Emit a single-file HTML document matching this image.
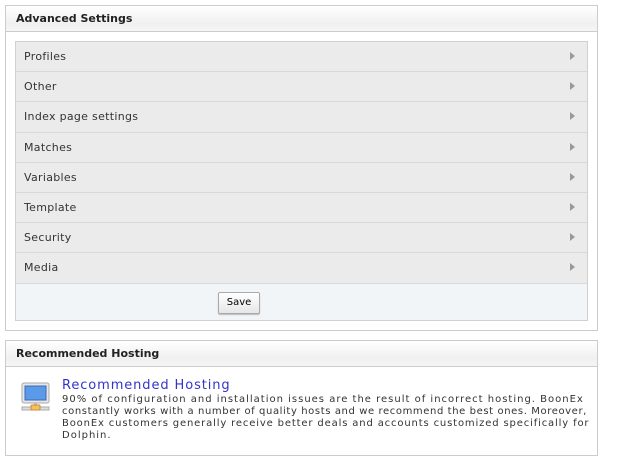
<!DOCTYPE html>
<html><head><style>
body{margin:0;background:#fff;font-family:"DejaVu Sans",Verdana,sans-serif;width:618px;height:464px;position:relative;overflow:hidden}
.box{position:absolute;left:5px;width:591px;border:1px solid #ccc;background:#fff}
.hd{height:25px;border-bottom:1px solid #ccc;background:linear-gradient(#fff,#f0f0f0 70%,#f5f5f5);font-weight:bold;font-size:11px;line-height:25px;padding-left:10px;color:#222}
.list{position:absolute;left:9px;top:35px;width:571px;border:1px solid #d0d0d0;background:#ebebeb}
.row{height:29px;border-bottom:1px solid #d8d8d8;font-size:11px;line-height:30px;padding-left:8px;color:#333;position:relative;letter-spacing:0.3px}
.row.t{height:30px}
.row:after{content:"";position:absolute;right:12px;top:10px;border-left:5px solid #999;border-top:4.5px solid transparent;border-bottom:4.5px solid transparent}
.save{height:36px;background:#f2f5f8;position:relative}
.btn{position:absolute;left:202px;top:8px;width:40px;height:20px;border:1px solid #aaa;border-radius:2px;background:linear-gradient(#fff,#e6e6e6);font-size:10px;line-height:20px;text-align:center;color:#000;box-shadow:0 1px 1px #bbb}
.tx span{display:block}
</style></head><body>
<div class="box" style="top:5px;height:324px">
<div class="hd">Advanced Settings</div>
<div class="list">
<div class="row">Profiles</div><div class="row">Other</div><div class="row t">Index page settings</div><div class="row">Matches</div><div class="row">Variables</div><div class="row">Template</div><div class="row">Security</div><div class="row t">Media</div>
<div class="save"><div class="btn">Save</div></div>
</div></div>
<div class="box" style="top:340px;height:114px">
<div class="hd">Recommended Hosting</div>
<svg style="position:absolute;left:15px;top:41px" width="30" height="30" viewBox="0 0 30 30">
<rect x="1" y="1" width="27" height="20" rx="2" fill="#e6e6e6" stroke="#aaa"/>
<rect x="4" y="4" width="21" height="14" fill="#5a9ae8" stroke="#3a6ab8"/>
<rect x="1" y="25" width="27" height="3" fill="#ddd" stroke="#aaa"/>
<rect x="13" y="21" width="3" height="3" fill="#bbb"/>
<rect x="10" y="23" width="9" height="5" rx="1" fill="#f4c060" stroke="#c89030"/>
</svg>
<div style="position:absolute;left:56px;top:37px;font-size:13px;color:#3333cc;letter-spacing:0.9px">Recommended Hosting</div>
<div class="tx" style="position:absolute;left:56px;top:53px;width:540px;white-space:nowrap;font-size:10px;line-height:12px;color:#333;letter-spacing:1px"><span>90% of configuration and installation issues are the result of incorrect hosting. BoonEx</span><span style="letter-spacing:0.6px">constantly works with a number of quality hosts and we recommend the best ones. Moreover,</span><span style="letter-spacing:0.85px">BoonEx customers generally receive better deals and accounts customized specifically for</span><span>Dolphin.</span></div>
</div>
</body></html>
